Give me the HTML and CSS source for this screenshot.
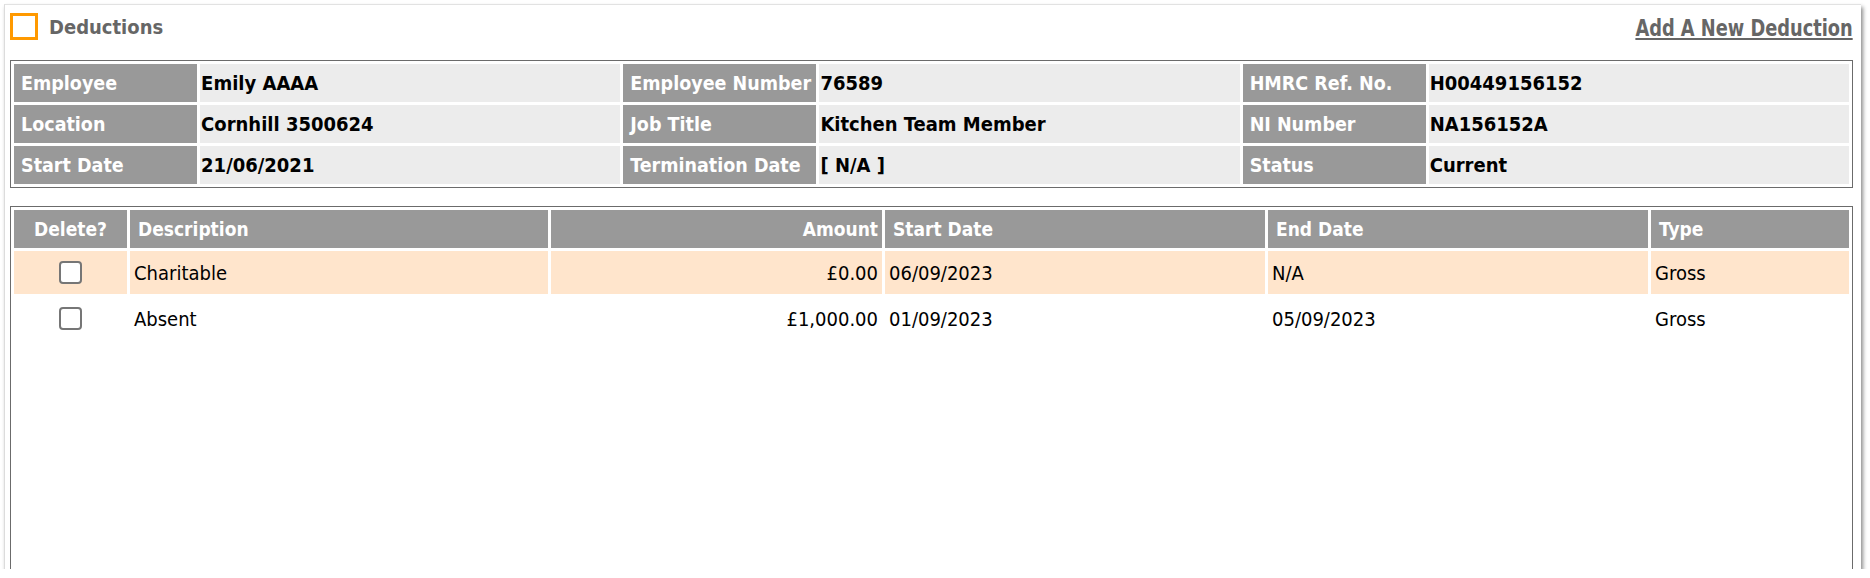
FILE: index.html
```html
<!DOCTYPE html>
<html lang="en">

<head>
    <meta charset="UTF-8">
    <meta name="viewport" content="width=device-width, initial-scale=1.0">
    <title>Deductions</title>
    <link rel="stylesheet" href="styles.css">
</head>

<body>
    <div class="panel">
        <div class="panel-head">
            <div class="title">
                <span class="title-box"></span>
                <span class="title-text">Deductions</span>
            </div>
            <a href="#" class="add-link">Add A New Deduction</a>
        </div>

        <table class="info-table">
            <colgroup>
                <col class="c-label1">
                <col class="c-value">
                <col class="c-label2">
                <col class="c-value">
                <col class="c-label1">
                <col class="c-value">
            </colgroup>
            <tr>
                <th>Employee</th>
                <td>Emily AAAA</td>
                <th>Employee Number</th>
                <td>76589</td>
                <th>HMRC Ref. No.</th>
                <td>H00449156152</td>
            </tr>
            <tr>
                <th>Location</th>
                <td>Cornhill 3500624</td>
                <th>Job Title</th>
                <td>Kitchen Team Member</td>
                <th>NI Number</th>
                <td>NA156152A</td>
            </tr>
            <tr>
                <th>Start Date</th>
                <td>21/06/2021</td>
                <th>Termination Date</th>
                <td>[ N/A ]</td>
                <th>Status</th>
                <td>Current</td>
            </tr>
        </table>

        <div class="list-wrap">
            <table class="list-table">
                <colgroup>
                    <col class="c-delete">
                    <col class="c-desc">
                    <col class="c-amount">
                    <col class="c-date">
                    <col class="c-date">
                    <col class="c-type">
                </colgroup>
                <thead>
                    <tr>
                        <th class="center">Delete?</th>
                        <th>Description</th>
                        <th class="right">Amount</th>
                        <th>Start Date</th>
                        <th>End Date</th>
                        <th>Type</th>
                    </tr>
                </thead>
                <tbody>
                    <tr class="highlight">
                        <td class="center"><input type="checkbox" name="delete_1"></td>
                        <td>Charitable</td>
                        <td class="right">£0.00</td>
                        <td>06/09/2023</td>
                        <td>N/A</td>
                        <td>Gross</td>
                    </tr>
                    <tr>
                        <td class="center"><input type="checkbox" name="delete_2"></td>
                        <td>Absent</td>
                        <td class="right">£1,000.00</td>
                        <td>01/09/2023</td>
                        <td>05/09/2023</td>
                        <td>Gross</td>
                    </tr>
                </tbody>
            </table>
        </div>
    </div>
</body>

</html>
```

FILE: styles.css
```css
body {
    margin: 0;
    background-color: #ffffff;
    font-family: "DejaVu Sans Condensed", "DejaVu Sans", sans-serif;
    font-stretch: condensed;
    color: #000000;
}

.panel {
    box-sizing: border-box;
    height: 565px;
    margin: 4px 9px 0 4px;
    padding: 0 8px 0 5px;
    border-top: 1px solid #e2e2e2;
    border-left: 1px solid #dcdcdc;
    background-color: #ffffff;
    box-shadow: 2px 3px 4px rgba(0, 0, 0, 0.45);
    overflow: hidden;
}

.panel-head {
    display: flex;
    justify-content: space-between;
    align-items: flex-start;
    height: 55px;
}

.title {
    display: flex;
    align-items: center;
    gap: 11px;
    padding-top: 8px;
}

.title-box {
    box-sizing: border-box;
    width: 28px;
    height: 27px;
    border: 3px solid #ff9900;
}

.title-text {
    color: #666666;
    font-size: 20px;
    font-weight: bold;
}

.add-link {
    display: inline-block;
    margin-top: 12px;
    color: #666666;
    font-size: 23px;
    font-weight: bold;
    line-height: 1;
    text-decoration: underline;
    transform: scaleX(0.86);
    transform-origin: right center;
}

table {
    width: 100%;
    table-layout: fixed;
    border-spacing: 3px;
}

th {
    background-color: #999999;
    color: #ffffff;
    font-weight: bold;
    text-align: left;
    white-space: nowrap;
}

.info-table {
    margin-bottom: 18px;
    border: 1px solid #6b6b6b;
    font-size: 19.5px;
}

.info-table th,
.info-table td {
    height: 38px;
    padding: 0;
    vertical-align: middle;
}

.info-table th {
    padding-left: 7px;
}

.info-table td {
    padding-left: 1px;
    background-color: #ececec;
    font-size: 20px;
    font-weight: bold;
}

.c-label1 {
    width: 183px;
}

.c-label2 {
    width: 193px;
}

.c-value {
    width: 420px;
}

.list-wrap {
    height: 400px;
    border: 1px solid #6b6b6b;
}

.list-table {
    font-size: 19px;
}

.list-table th {
    height: 38px;
    padding: 0 4px 0 8px;
}

.list-table td {
    height: 43px;
    padding: 0 4px;
    font-size: 20px;
    vertical-align: middle;
}

.list-table .center {
    padding: 0;
    text-align: center;
}

.list-table .right {
    text-align: right;
}

.highlight td {
    background-color: #ffe5cc;
}

.c-delete {
    width: 113px;
}

.c-desc {
    width: 418px;
}

.c-amount {
    width: 331px;
}

.c-date {
    width: 380px;
}

.c-type {
    width: 198px;
}

input[type="checkbox"] {
    appearance: none;
    box-sizing: border-box;
    display: block;
    width: 23px;
    height: 23px;
    margin: 0 auto;
    border: 2px solid #767676;
    border-radius: 4px;
    background-color: #ffffff;
}
```
